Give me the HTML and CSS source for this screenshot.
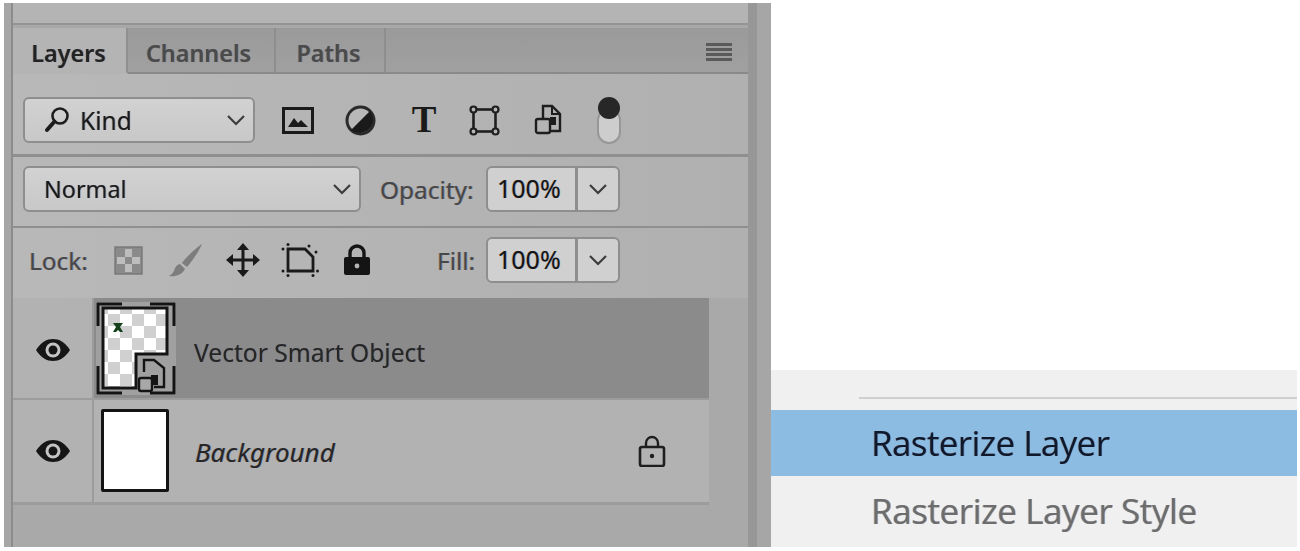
FILE: index.html
```html
<!DOCTYPE html>
<html lang="en">
<head>
    <meta charset="UTF-8">
    <meta name="viewport" content="width=device-width, initial-scale=1.0">
    <link rel="stylesheet" href="styles.css">
    <title>Rasterize Layer</title>
</head>
<body>
    <div class="page">
        <div class="panel">
            <div class="panel-edge"></div>
            <div class="panel-main">
                <div class="panel-top"></div>

                <div class="tabs">
                    <div class="tab active">Layers</div>
                    <div class="tab tab-channels">Channels</div>
                    <div class="tab tab-paths">Paths</div>
                    <div class="tab-menu"><span></span><span></span><span></span><span></span></div>
                </div>

                <div class="row row-filter">
                    <div class="select select-kind">
                        <svg class="search-icon" width="26" height="28" viewBox="0 0 26 28"><circle cx="16" cy="10" r="7.5" fill="none" stroke="#1d1d1d" stroke-width="2.6"/><path d="M10.5 15.5 3 24" stroke="#1d1d1d" stroke-width="4" stroke-linecap="round"/></svg>
                        <span class="label-text">Kind</span>
                        <svg class="chevron" width="20" height="12" viewBox="0 0 20 12"><path d="M2 2l8 8 8-8" fill="none" stroke="#3c3c3c" stroke-width="2.2"/></svg>
                    </div>
                    <div class="filter-icons">
                        <div class="icon-cell">
                            <svg width="32" height="27" viewBox="0 0 32 27"><rect x="1.5" y="1.5" width="29" height="24" fill="none" stroke="#1a1a1a" stroke-width="3"/><path d="M6 20l6-9 4 5 3-3 7 7z" fill="#1a1a1a"/></svg>
                        </div>
                        <div class="icon-cell">
                            <svg width="31" height="31" viewBox="0 0 31 31"><circle cx="15.5" cy="15.5" r="13.5" fill="#b8b8b8" stroke="#2a2a2a" stroke-width="3"/><path d="M25 6A13.5 13.5 0 0 1 6 25z" fill="#1a1a1a"/></svg>
                        </div>
                        <div class="icon-cell"><span class="type-icon">T</span></div>
                        <div class="icon-cell">
                            <svg width="31" height="31" viewBox="0 0 31 31"><rect x="4.5" y="4.5" width="22" height="22" fill="none" stroke="#1e1e1e" stroke-width="2.6"/><g fill="#b4b4b4" stroke="#1e1e1e" stroke-width="2.2"><circle cx="4.5" cy="4.5" r="3"/><circle cx="26.5" cy="4.5" r="3"/><circle cx="4.5" cy="26.5" r="3"/><circle cx="26.5" cy="26.5" r="3"/></g></svg>
                        </div>
                        <div class="icon-cell doc-cell">
                            <svg width="28" height="32" viewBox="0 0 28 32"><path d="M9 14V2h9l8 8v17h-9" fill="none" stroke="#1e1e1e" stroke-width="2.4"/><path d="M18 2v8h8" fill="none" stroke="#1e1e1e" stroke-width="2"/><rect x="2" y="15" width="14" height="14" rx="2" fill="#b4b4b4" stroke="#1e1e1e" stroke-width="2.4"/><rect x="16" y="13" width="6" height="8" fill="#1e1e1e"/></svg>
                        </div>
                        <div class="toggle"><div class="toggle-knob"></div></div>
                    </div>
                </div>

                <div class="row row-blend">
                    <div class="select select-blend">
                        <span class="label-text">Normal</span>
                        <svg class="chevron" width="20" height="12" viewBox="0 0 20 12"><path d="M2 2l8 8 8-8" fill="none" stroke="#3c3c3c" stroke-width="2.2"/></svg>
                    </div>
                    <div class="field-label opacity-label">Opacity:</div>
                    <div class="stepper">
                        <div class="stepper-value">100%</div>
                        <div class="stepper-btn"><svg width="20" height="12" viewBox="0 0 20 12"><path d="M2 2l8 8 8-8" fill="none" stroke="#3c3c3c" stroke-width="2.2"/></svg></div>
                    </div>
                </div>

                <div class="row row-lock">
                    <div class="field-label lock-label">Lock:</div>
                    <div class="lock-icons">
                        <div class="icon-cell">
                            <svg width="29" height="29" viewBox="0 0 29 29"><rect x="1.5" y="1.5" width="26" height="26" fill="#bdbdbd" stroke="#7c7c7c" stroke-width="2.5"/><g fill="#8a8a8a"><rect x="3" y="3" width="8" height="8"/><rect x="18" y="3" width="8" height="8"/><rect x="11" y="11" width="7" height="7"/><rect x="3" y="18" width="8" height="8"/><rect x="18" y="18" width="8" height="8"/></g></svg>
                        </div>
                        <div class="icon-cell">
                            <svg width="36" height="36" viewBox="0 0 36 36"><path d="M34 2C28 6 19 14 14 21l5 4C25 18 31 9 34 2z" fill="#7d7d7d"/><path d="M12 22c-4 1-5 4-6 7-1 2-3 4-5 5 6 1 13-1 16-7z" fill="#7d7d7d"/></svg>
                        </div>
                        <div class="icon-cell">
                            <svg width="34" height="34" viewBox="0 0 34 34"><path d="M17 4v26M4 17h26" stroke="#1a1a1a" stroke-width="3"/><path d="M17 0l6 7H11zM17 34l-6-7h12zM0 17l7-6v12zM34 17l-7 6V11z" fill="#1a1a1a"/></svg>
                        </div>
                        <div class="icon-cell">
                            <svg width="38" height="34" viewBox="0 0 38 34"><path d="M7 6h17l8 8v14H7z" fill="none" stroke="#1a1a1a" stroke-width="2.8"/><g fill="#1a1a1a"><circle cx="7" cy="1.5" r="1.5"/><circle cx="2" cy="6" r="1.5"/><circle cx="2" cy="28" r="1.5"/><circle cx="7" cy="32.5" r="1.5"/><circle cx="32" cy="32.5" r="1.5"/><circle cx="36.5" cy="28" r="1.5"/><circle cx="28" cy="3" r="1.5"/><circle cx="35" cy="9" r="1.5"/></g></svg>
                        </div>
                        <div class="icon-cell">
                            <svg width="28" height="32" viewBox="0 0 28 32"><path d="M7 14V9a7 7 0 0 1 14 0v5" fill="none" stroke="#141414" stroke-width="3.4"/><rect x="1" y="13" width="26" height="18" rx="2" fill="#141414"/><circle cx="14" cy="22" r="2.4" fill="#b4b4b4"/></svg>
                        </div>
                    </div>
                    <div class="field-label fill-label">Fill:</div>
                    <div class="stepper">
                        <div class="stepper-value">100%</div>
                        <div class="stepper-btn"><svg width="20" height="12" viewBox="0 0 20 12"><path d="M2 2l8 8 8-8" fill="none" stroke="#3c3c3c" stroke-width="2.2"/></svg></div>
                    </div>
                </div>

                <div class="layers">
                    <div class="layer selected">
                        <div class="layer-eye">
                            <svg width="36" height="24" viewBox="0 0 36 24"><path d="M1 12C6 4 12 1 18 1s12 3 17 11c-5 8-11 11-17 11S6 20 1 12z" fill="#161616"/><circle cx="18" cy="12" r="7.5" fill="#c4c4c4"/><circle cx="18" cy="12" r="4.5" fill="#161616"/></svg>
                        </div>
                        <div class="layer-body">
                            <svg class="thumb-smart" width="80" height="93" viewBox="0 0 80 93">
                                <defs>
                                    <pattern id="checker" width="24" height="24" patternUnits="userSpaceOnUse">
                                        <rect width="24" height="24" fill="#fff"/>
                                        <rect width="12" height="12" fill="#d0d0d0"/>
                                        <rect x="12" y="12" width="12" height="12" fill="#d0d0d0"/>
                                    </pattern>
                                </defs>
                                <path d="M7 6h64v46H40v34H7z" fill="url(#checker)" stroke="#141414" stroke-width="3"/>
                                <path d="M17 21h10l-3 4 3 5H24l-2-2-2 2h-3l3-5z" fill="#14401c"/>
                                <path d="M2 24V2h24M54 2h24v22M2 64v27h24M54 91h24V64" fill="none" stroke="#141414" stroke-width="3"/>
                                <path d="M48 70V58h10l10 8v19H58" fill="none" stroke="#141414" stroke-width="2.4"/>
                                <rect x="55" y="73" width="7" height="10" fill="#141414"/>
                                <rect x="43" y="76" width="13" height="13" rx="2" fill="#a8a8a8" stroke="#141414" stroke-width="2.4"/>
                            </svg>
                            <div class="layer-name">Vector Smart Object</div>
                        </div>
                    </div>
                    <div class="layer">
                        <div class="layer-eye">
                            <svg width="36" height="24" viewBox="0 0 36 24"><path d="M1 12C6 4 12 1 18 1s12 3 17 11c-5 8-11 11-17 11S6 20 1 12z" fill="#161616"/><circle cx="18" cy="12" r="7.5" fill="#c4c4c4"/><circle cx="18" cy="12" r="4.5" fill="#161616"/></svg>
                        </div>
                        <div class="layer-body">
                            <div class="thumb-white"></div>
                            <div class="layer-name italic">Background</div>
                            <svg class="layer-lock" width="30" height="32" viewBox="0 0 30 32"><path d="M9 12V8a6 6 0 0 1 12 0v4" fill="none" stroke="#1e1e1e" stroke-width="2.4"/><rect x="3" y="12" width="24" height="19" rx="2" fill="none" stroke="#1e1e1e" stroke-width="2.6"/><circle cx="15" cy="21" r="2.2" fill="#1e1e1e"/></svg>
                        </div>
                    </div>
                </div>
                <div class="panel-bottom"></div>
            </div>
            <div class="panel-side"></div>
        </div>

        <div class="menu">
            <div class="menu-sep"></div>
            <div class="menu-item hover">Rasterize Layer</div>
            <div class="menu-item disabled">Rasterize Layer Style</div>
        </div>
    </div>
</body>
</html>
```

FILE: styles.css
```css
body {
    margin: 0;
    padding: 0;
    background-color: #ffffff;
    font-family: "Noto Sans", "Open Sans", sans-serif;
    color: #1f1f1f;
    overflow: hidden;
}

.page {
    display: flex;
    width: 1300px;
    height: 551px;
    filter: blur(0.6px);
}

/* layers panel */
.panel {
    display: flex;
    width: 767px;
    height: 544px;
    margin: 3px 0 0 4px;
    flex: none;
    background-color: #b4b4b4;
}

.panel-edge {
    width: 7px;
    flex: none;
    background-color: #a6a6a6;
    border-right: 2px solid #8c8c8c;
}

.panel-main {
    width: 735px;
    flex: none;
    display: flex;
    flex-direction: column;
}

.panel-side {
    flex: 1;
    background-color: #a6a6a6;
    border-left: 9px solid #979797;
}

.panel-top {
    height: 20px;
    background-color: #b4b4b4;
    border-bottom: 2px solid #949494;
    flex: none;
}

.tabs {
    display: flex;
    height: 49px;
    box-sizing: border-box;
    flex: none;
    background: linear-gradient(#9a9a9a, #a0a0a0);
    border-top: 3px solid #a8a8a8;
    border-bottom: 2px solid #8a8a8a;
    position: relative;
}

.tab {
    display: flex;
    align-items: center;
    justify-content: center;
    padding-top: 6px;
    font-size: 23.4px;
    font-weight: 600;
    color: #4a4a4a;
    border-right: 2px solid #8e8e8e;
    box-sizing: border-box;
}

.tab.active {
    width: 115px;
    padding-right: 2px;
    color: #232323;
    background-color: #b4b4b4;
    height: 46px;
    border-right-color: #909090;
    border-bottom: 2px solid #b4b4b4;
    margin-bottom: -2px;
}

.tab-channels {
    width: 148px;
    padding-right: 5px;
}

.tab-paths {
    width: 110px;
    padding-right: 3px;
}

.tab-menu {
    margin-left: auto;
    margin-right: 16px;
    margin-top: 4px;
    align-self: center;
    width: 26px;
    display: flex;
    flex-direction: column;
    gap: 2px;
}

.tab-menu span {
    display: block;
    height: 3px;
    background-color: #5a5a5a;
}

.row {
    display: flex;
    align-items: center;
    box-sizing: border-box;
    flex: none;
    padding-left: 10px;
    background: linear-gradient(90deg, #b8b8b8, #b0b0b0);
    border-bottom: 2px solid #8f8f8f;
}

.row-filter {
    height: 83px;
    padding-top: 12px;
    border-bottom-width: 3px;
}

.row-blend {
    height: 71px;
    padding-bottom: 5px;
}

.row-lock {
    height: 70px;
    padding-bottom: 6px;
    border-bottom: none;
}

.select {
    display: flex;
    align-items: center;
    height: 46px;
    box-sizing: border-box;
    background: linear-gradient(#d2d2d2, #c8c8c8);
    border: 2px solid #8e8e8e;
    border-radius: 6px;
    font-size: 24.5px;
    color: #1a1a1a;
    position: relative;
}

.select-kind {
    width: 232px;
    padding-left: 19px;
}

.select-blend {
    width: 338px;
    padding-left: 19px;
    font-size: 23.4px;
}

.search-icon {
    margin-right: 10px;
}

.chevron {
    margin-left: auto;
    margin-right: 7px;
}

.filter-icons {
    display: flex;
    align-items: center;
    margin-left: 12px;
}

.icon-cell {
    width: 62px;
    display: flex;
    justify-content: center;
    align-items: center;
}

.doc-cell {
    padding-left: 4px;
    box-sizing: border-box;
}

.lock-icons .icon-cell {
    width: 57px;
}

.type-icon {
    font-family: "Liberation Serif", serif;
    font-weight: 700;
    font-size: 37px;
    line-height: 30px;
    margin-left: 4px;
    color: #1a1a1a;
}

.toggle {
    width: 24px;
    height: 36px;
    margin: 12px 0 0 20px;
    background-color: #cdcdcd;
    border: 2px solid #979797;
    box-sizing: border-box;
    border-radius: 12px;
    position: relative;
}

.toggle-knob {
    position: absolute;
    left: -1px;
    top: -13px;
    width: 22px;
    height: 22px;
    border-radius: 50%;
    background-color: #272727;
}

.field-label {
    font-size: 24.4px;
    color: #474747;
}

.opacity-label {
    margin-left: 19px;
    width: 106px;
}

.lock-label {
    margin-left: 6px;
    width: 71px;
}

.lock-icons {
    display: flex;
    align-items: center;
}

.fill-label {
    margin-left: 52px;
    width: 49px;
}

.stepper {
    display: flex;
    width: 134px;
    height: 46px;
    box-sizing: border-box;
    background-color: #d0d0d0;
    border: 2px solid #8e8e8e;
    border-radius: 6px;
    font-size: 25px;
    color: #141414;
}

.stepper-value {
    width: 90px;
    padding-left: 9px;
    box-sizing: border-box;
    line-height: 40px;
    border-right: 3px solid #8e8e8e;
}

.stepper-btn {
    flex: 1;
    display: flex;
    align-items: center;
    justify-content: center;
}

/* layer list */
.layers {
    flex: none;
    width: 100%;
    background-color: #a9a9a9;
}

.layer {
    display: flex;
    width: 696px;
    height: 100px;
    border-bottom: 2px solid #9c9c9c;
}

.layer + .layer {
    height: 102px;
    border-bottom-width: 3px;
}

.layer-eye {
    width: 79px;
    flex: none;
    display: flex;
    align-items: center;
    justify-content: center;
    background-color: #b2b2b2;
    border-right: 2px solid #9c9c9c;
}

.selected .layer-eye svg {
    margin-top: 4px;
}

.layer-body {
    flex: 1;
    display: flex;
    align-items: center;
    background-color: #b2b2b2;
    position: relative;
}

.selected .layer-body {
    background-color: #8b8b8b;
}

.thumb-smart {
    margin-left: 2px;
    flex: none;
    background-color: #a0a0a0;
}

.thumb-white {
    width: 68px;
    height: 83px;
    margin: 0 6px 2px 7px;
    box-sizing: border-box;
    flex: none;
    background-color: #ffffff;
    border: 3px solid #141414;
    border-radius: 2px;
}

.layer-name {
    margin-left: 18px;
    margin-top: 8px;
    font-size: 24.6px;
    color: #262626;
}

.layer-name.italic {
    margin-left: 20px;
    margin-top: 2px;
    font-size: 26px;
    font-style: italic;
}

.layer-lock {
    margin-left: auto;
    margin-right: 42px;
}

.panel-bottom {
    flex: 1;
    background-color: #a9a9a9;
}

/* context menu */
.menu {
    width: 526px;
    height: 177px;
    flex: none;
    margin-top: 370px;
    box-sizing: border-box;
    padding-top: 27px;
    background-color: #f0f0f0;
}

.menu-sep {
    height: 2px;
    margin: 0 0 11px 88px;
    background-color: #cfcfcf;
}

.menu-item {
    padding-left: 100px;
    font-family: "Open Sans", sans-serif;
    font-size: 35px;
    letter-spacing: -0.6px;
}

.menu-item.hover {
    height: 66px;
    line-height: 66px;
    background-color: #8dbce2;
    color: #10182c;
}

.menu-item.disabled {
    height: 70px;
    line-height: 70px;
    letter-spacing: -0.4px;
    color: #6d6d6d;
}

.tab,
.label-text,
.field-label,
.stepper-value,
.layer-name,
.menu-item {
    text-shadow: -0.7px 0 rgba(150, 100, 50, 0.35), 0.7px 0 rgba(40, 90, 170, 0.4);
}
```
